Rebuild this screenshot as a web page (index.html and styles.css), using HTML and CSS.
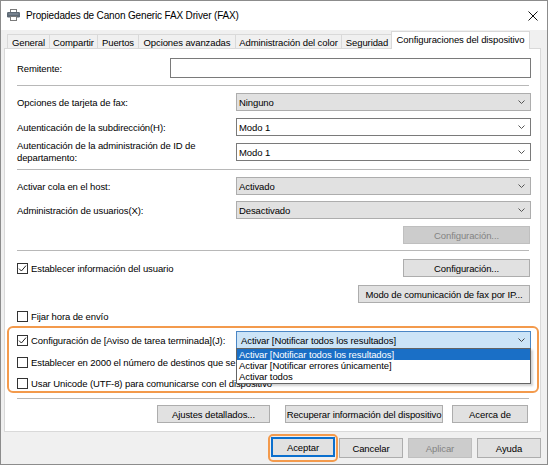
FILE: index.html
```html
<!DOCTYPE html>
<html lang="es">
<head>
<meta charset="utf-8">
<title>Propiedades de Canon Generic FAX Driver (FAX)</title>
<link rel="stylesheet" href="styles.css">
</head>
<body>
<div class="window">
  <div class="titlebar">
    <svg class="app-icon" width="13" height="12" viewBox="0 0 13 12">
      <rect x="3.5" y="0.5" width="6" height="3" fill="#fff" stroke="#7a7a7a"/>
      <rect x="0" y="3" width="13" height="5.5" rx="1.2" fill="#5d6975"/>
      <rect x="1.5" y="4.5" width="10" height="1" fill="#8f9aa5"/>
      <rect x="3.5" y="7.5" width="6" height="4" fill="#fff" stroke="#7a7a7a"/>
    </svg>
    <span class="title">Propiedades de Canon Generic FAX Driver (FAX)</span>
    <svg class="close" width="10" height="10" viewBox="0 0 10 10">
      <path d="M0.5 0.5 L9.5 9.5 M9.5 0.5 L0.5 9.5" stroke="#111" stroke-width="1"/>
    </svg>
  </div>

  <div class="tabs">
    <div class="tab">General</div>
    <div class="tab">Compartir</div>
    <div class="tab">Puertos</div>
    <div class="tab">Opciones avanzadas</div>
    <div class="tab">Administración del color</div>
    <div class="tab">Seguridad</div>
    <div class="tab active">Configuraciones del dispositivo</div>
  </div>

  <div class="panel">
    <div class="row row-sender">
      <span class="label">Remitente:</span>
      <div class="textbox"></div>
    </div>
    <div class="sep sep-a"></div>

    <div class="row row-b">
      <span class="label">Opciones de tarjeta de fax:</span>
      <div class="combo combo-gray"><span class="combo-text">Ninguno</span>
        <svg class="chev" width="7" height="4" viewBox="0 0 7 4"><polyline points="0.5,0.5 3.5,3.5 6.5,0.5" fill="none" stroke="#555"/></svg></div>
    </div>
    <div class="row row-c">
      <span class="label">Autenticación de la subdirección(H):</span>
      <div class="combo combo-white"><span class="combo-text">Modo 1</span>
        <svg class="chev" width="7" height="4" viewBox="0 0 7 4"><polyline points="0.5,0.5 3.5,3.5 6.5,0.5" fill="none" stroke="#555"/></svg></div>
    </div>
    <div class="row row-d">
      <span class="label label-wrap">Autenticación de la administración de ID de departamento:</span>
      <div class="combo combo-white"><span class="combo-text">Modo 1</span>
        <svg class="chev" width="7" height="4" viewBox="0 0 7 4"><polyline points="0.5,0.5 3.5,3.5 6.5,0.5" fill="none" stroke="#555"/></svg></div>
    </div>
    <div class="sep sep-b"></div>

    <div class="row row-e">
      <span class="label">Activar cola en el host:</span>
      <div class="combo combo-gray"><span class="combo-text">Activado</span>
        <svg class="chev" width="7" height="4" viewBox="0 0 7 4"><polyline points="0.5,0.5 3.5,3.5 6.5,0.5" fill="none" stroke="#555"/></svg></div>
    </div>
    <div class="row row-f">
      <span class="label">Administración de usuarios(X):</span>
      <div class="combo combo-gray"><span class="combo-text">Desactivado</span>
        <svg class="chev" width="7" height="4" viewBox="0 0 7 4"><polyline points="0.5,0.5 3.5,3.5 6.5,0.5" fill="none" stroke="#555"/></svg></div>
    </div>
    <div class="row row-g">
      <div class="btn btn-config btn-disabled">Configuración...</div>
    </div>
    <div class="sep sep-c"></div>

    <div class="row row-h">
      <label class="check"><span class="box"><svg width="9" height="9" viewBox="0 0 9 9"><polyline points="1,4.6 3.4,7 8,1.6" fill="none" stroke="#222" stroke-width="1"/></svg></span>Establecer información del usuario</label>
      <div class="btn btn-config">Configuración...</div>
    </div>
    <div class="row row-i">
      <div class="btn btn-ipfax">Modo de comunicación de fax por IP...</div>
    </div>
    <div class="row row-j">
      <label class="check"><span class="box"></span>Fijar hora de envío</label>
    </div>

    <div class="focus-group">
      <div class="row row-k">
        <label class="check"><span class="box"><svg width="9" height="9" viewBox="0 0 9 9"><polyline points="1,4.6 3.4,7 8,1.6" fill="none" stroke="#222" stroke-width="1"/></svg></span>Configuración de [Aviso de tarea terminada](J):</label>
        <div class="combo combo-open"><span class="combo-text">Activar [Notificar todos los resultados]</span>
          <svg class="chev" width="7" height="4" viewBox="0 0 7 4"><polyline points="0.5,0.5 3.5,3.5 6.5,0.5" fill="none" stroke="#444"/></svg>
          <ul class="dropdown">
            <li class="selected">Activar [Notificar todos los resultados]</li>
            <li>Activar [Notificar errores únicamente]</li>
            <li>Activar todos</li>
          </ul>
        </div>
      </div>
      <div class="row row-l">
        <label class="check"><span class="box"></span>Establecer en 2000 el número de destinos que se pueden especificar</label>
      </div>
      <div class="row row-m">
        <label class="check"><span class="box"></span>Usar Unicode (UTF-8) para comunicarse con el dispositivo</label>
      </div>
    </div>
    <div class="sep sep-d"></div>

    <div class="row row-bottom">
      <div class="btn btn-ajustes">Ajustes detallados...</div>
      <div class="btn btn-recuperar">Recuperar información del dispositivo</div>
      <div class="btn btn-acerca">Acerca de</div>
    </div>
  </div>

  <div class="dialog-buttons">
    <div class="default-ring"><div class="btn dlg-btn btn-default">Aceptar</div></div>
    <div class="btn dlg-btn">Cancelar</div>
    <div class="btn dlg-btn btn-disabled">Aplicar</div>
    <div class="btn dlg-btn">Ayuda</div>
  </div>
</div>
</body>
</html>
```

FILE: styles.css
```css
* { box-sizing: border-box; }
html, body { margin: 0; padding: 0; }
body {
  width: 548px;
  height: 465px;
  overflow: hidden;
  font-family: "Liberation Sans", Arial, sans-serif;
  font-size: 9.5px;
  letter-spacing: -0.1px;
  color: #000;
  background: #f0f0f0;
}

.window {
  width: 548px;
  height: 465px;
  border: 1px solid #8c8c8c;
  background: #f0f0f0;
  display: flex;
  flex-direction: column;
}

/* title bar */
.titlebar {
  height: 29px;
  flex: none;
  background: #fff;
  display: flex;
  align-items: center;
  padding-left: 6px;
  padding-right: 9px;
}
.app-icon { flex: none; margin-top: -1px; }
.title {
  margin-left: 6px;
  font-size: 10px;
  letter-spacing: -0.15px;
  color: #000;
}
.close { margin-left: auto; }

/* tabs */
.tabs {
  height: 18px;
  flex: none;
  margin-top: 1px;
  margin-bottom: -1px;
  padding-left: 6px;
  display: flex;
  align-items: flex-end;
  position: relative;
  z-index: 2;
}
.tab {
  height: 14px;
  margin-bottom: 1px;
  margin-right: -1px;
  border: 1px solid #d9d9d9;
  border-bottom: none;
  background: #f0f0f0;
  display: flex;
  align-items: center;
  justify-content: center;
  padding-top: 1px;
  white-space: nowrap;
}
.tab:nth-child(1) { width: 43px; }
.tab:nth-child(2) { width: 49px; }
.tab:nth-child(3) { width: 42px; }
.tab:nth-child(4) { width: 98px; }
.tab:nth-child(5) { width: 107px; }
.tab:nth-child(6) { width: 52px; }
.tab.active {
  width: 139px;
  height: 18px;
  margin-bottom: 0;
  margin-left: -1px;
  background: #fff;
  padding-top: 0;
  padding-bottom: 2px;
}

/* panel */
.panel {
  height: 384px;
  flex: none;
  margin: 0 6px 0 3px;
  border: 1px solid #d9d9d9;
  background: #fff;
  padding: 0 9px 0 12px;
  display: flex;
  flex-direction: column;
  position: relative;
  z-index: 1;
}

.row {
  display: flex;
  align-items: center;
  flex: none;
}
.label { white-space: nowrap; }
.label-wrap { white-space: normal; width: 205px; line-height: 12px; }

.row-sender { margin-top: 9px; height: 20px; }
.sep { height: 1px; background: #b8b8b8; margin-right: 2px; flex: none; }
.sep-a { margin-top: 7px; }
.row-b { margin-top: 7px; height: 18px; }
.row-c { margin-top: 7px; height: 18px; }
.row-d { margin-top: 7px; height: 18px; }
.sep-b { margin-top: 8px; }
.row-e { margin-top: 7px; height: 18px; }
.row-f { margin-top: 6px; height: 18px; }
.row-g { margin-top: 7px; height: 18px; justify-content: flex-end; padding-right: 1px; }
.sep-c { margin-top: 6px; }
.row-h { margin-top: 8px; height: 18px; }
.row-i { margin-top: 8px; height: 18px; justify-content: flex-end; padding-right: 1px; }
.row-j { margin-top: 6px; height: 14px; }
.sep-d { margin-top: 5px; }
.row-bottom { margin-top: 6px; height: 18px; justify-content: flex-end; padding-right: 3px; }

.textbox {
  margin-left: auto;
  width: 361px;
  height: 20px;
  border: 1px solid #7a7a7a;
  background: #fff;
}

.combo {
  margin-left: auto;
  width: 295px;
  height: 18px;
  display: flex;
  align-items: center;
  padding: 0 5px 0 2px;
  position: relative;
}
.combo-text { flex: 1; white-space: nowrap; }
.chev { flex: none; }
.combo-gray { background: #e1e1e1; border: 1px solid #adadad; }
.combo-white { background: #fff; border: 1px solid #7a7a7a; }
.combo-open { background: #cce4f7; border: 1px solid #4a86c5; padding-left: 4px; }

.dropdown {
  position: absolute;
  top: 16px;
  left: -1px;
  width: 295px;
  margin: 0;
  padding: 0 0 1px 0;
  list-style: none;
  background: #fff;
  border: 1px solid #646464;
  box-shadow: 2px 2px 2px rgba(0, 0, 0, 0.18);
  z-index: 5;
}
.dropdown li {
  height: 11px;
  line-height: 11px;
  padding-left: 2px;
  white-space: nowrap;
}
.dropdown li.selected { background: #1a6fc6; color: #fff; }

/* buttons */
.btn {
  height: 18px;
  background: #e1e1e1;
  border: 1px solid #adadad;
  display: flex;
  align-items: center;
  justify-content: center;
  white-space: nowrap;
  flex: none;
}
.btn-disabled { background: #cccccc; border-color: #bfbfbf; color: #838383; }
.btn-config { width: 127px; margin-left: auto; }
.row-h .btn-config { margin-right: 1px; }
.btn-ipfax { width: 172px; }
.btn-ajustes { width: 113px; }
.btn-recuperar { width: 158px; margin-left: 15px; }
.btn-acerca { width: 76px; margin-left: 9px; }

/* checkboxes */
.check {
  display: flex;
  align-items: center;
  white-space: nowrap;
}
.box {
  width: 11px;
  height: 11px;
  border: 1px solid #333;
  background: #fff;
  margin-right: 3px;
  display: flex;
  align-items: center;
  justify-content: center;
  flex: none;
}

/* highlighted group */
.focus-group {
  margin: 3px -8px 0 -10px;
  border: 2px solid #f39a4c;
  border-radius: 6px;
  padding: 3px 6px 1px 8px;
  flex: none;
}
.row-k { height: 18px; position: relative; z-index: 4; }
.row-l { margin-top: 6px; height: 14px; }
.row-m { margin-top: 7px; height: 14px; }

/* dialog buttons */
.dialog-buttons {
  flex: none;
  margin-top: 6px;
  height: 20px;
  display: flex;
  justify-content: flex-end;
  gap: 5px;
  padding-right: 6px;
}
.dlg-btn { width: 64px; height: 20px; }
.default-ring {
  margin: -4px;
  padding: 1px;
  border: 2px solid #f39a4c;
  border-radius: 5px;
  flex: none;
}
.btn-default { border: 2px solid #0a6fce; }
```
